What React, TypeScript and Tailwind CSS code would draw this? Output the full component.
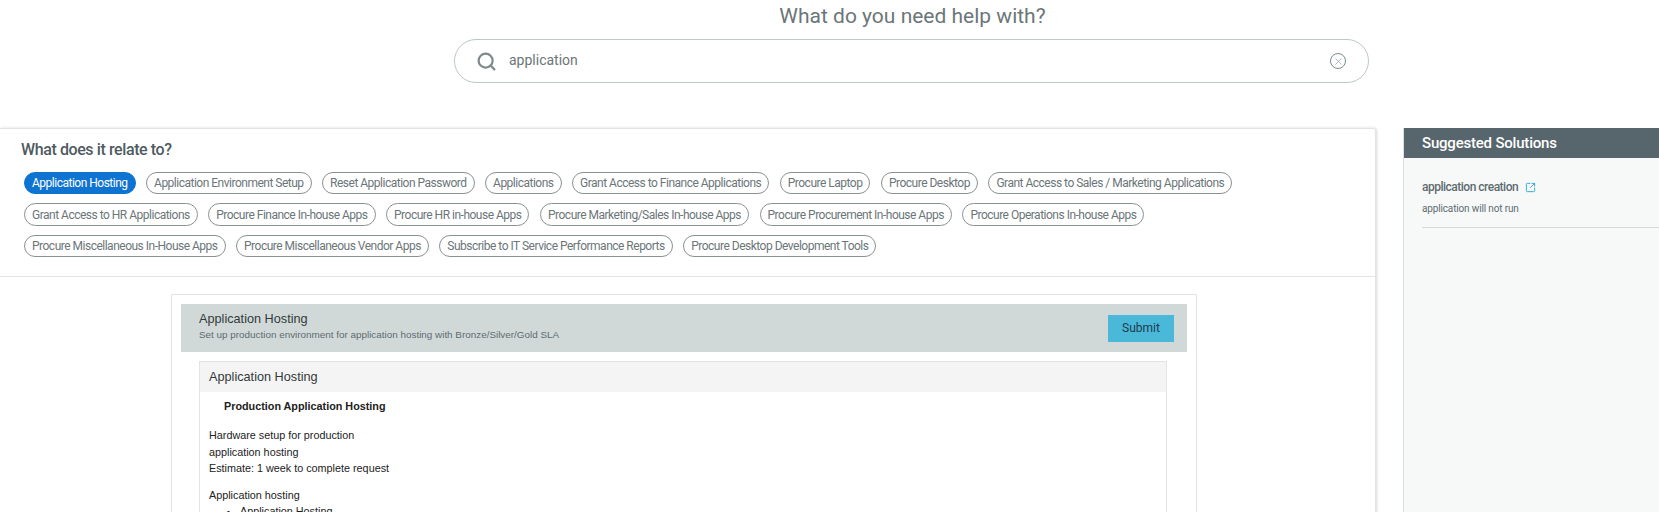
import { Search, SquareArrowOutUpRight, X } from "lucide-react";

const chipRows = [
  {
    height: "flex h-[22px] gap-[10.5px]",
    labels: [
      "Application Hosting",
      "Application Environment Setup",
      "Reset Application Password",
      "Applications",
      "Grant Access to Finance Applications",
      "Procure Laptop",
      "Procure Desktop",
      "Grant Access to Sales / Marketing Applications",
    ],
  },
  {
    height: "flex h-[23px] gap-[10.5px]",
    labels: [
      "Grant Access to HR Applications",
      "Procure Finance In-house Apps",
      "Procure HR in-house Apps",
      "Procure Marketing/Sales In-house Apps",
      "Procure Procurement In-house Apps",
      "Procure Operations In-house Apps",
    ],
  },
  {
    height: "flex h-[22px] gap-[10.5px]",
    labels: [
      "Procure Miscellaneous In-House Apps",
      "Procure Miscellaneous Vendor Apps",
      "Subscribe to IT Service Performance Reports",
      "Procure Desktop Development Tools",
    ],
  },
];

function Chip({ label, active }: { label: string; active: boolean }) {
  return (
    <span
      className={
        active
          ? "flex items-center rounded-full border border-[#0f74d1] bg-[#0f74d1] px-[7px] text-[12px] tracking-[-0.5px] text-white"
          : "flex items-center rounded-full border border-[#8a9191] bg-white px-[7px] text-[12px] tracking-[-0.5px] text-[#6b7679]"
      }
    >
      {label}
    </span>
  );
}

export default function App() {
  return (
    <div className="h-[512px] w-[1659px] overflow-hidden bg-white font-['Roboto',sans-serif]">
      <h1 className="pl-[166px] pt-[2px] text-center text-[21px] leading-[28px] text-[#6b7679]">
        What do you need help with?
      </h1>

      <div className="ml-[454px] mt-[9px] flex h-[44px] w-[915px] items-center rounded-full border border-[#bcc7c7] pl-[21px] pr-[22px]">
        <Search className="h-[21px] w-[21px] text-[#7d8a8c]" strokeWidth={2.5} />
        <span className="mb-[1px] ml-[12px] flex-1 text-[14px] text-[#6b7679]">application</span>
        <span className="flex h-[16px] w-[16px] items-center justify-center rounded-full border border-[#7d8a8c]">
          <X className="h-[11px] w-[11px] text-[#7d8a8c]" strokeWidth={1.25} />
        </span>
      </div>

      <div className="mt-[45px] flex items-start">
        <main className="h-[400px] w-[1376px] rounded-tr-[3px] border-r border-t border-[#e2e4e4] shadow-[1px_0_3px_rgba(0,0,0,0.15)]">
          <div className="h-[148px] border-b border-[#e2e4e4] pl-[21px] pt-[10px]">
            <h2 className="text-[16px] font-medium leading-[22px] tracking-[-0.4px] text-[#4f5b5f]">What does it relate to?</h2>
            <div className="mt-[11px] flex flex-col gap-[9px] pl-[3px]">
              {chipRows.map((row) => (
                <div key={row.labels[0]} className={row.height}>
                  {row.labels.map((label) => (
                    <Chip key={label} label={label} active={label === "Application Hosting"} />
                  ))}
                </div>
              ))}
            </div>
          </div>

          <div className="ml-[171px] mt-[17px] h-[240px] w-[1026px] border border-[#e2e4e4] px-[9px] pt-[9px] font-['Liberation_Sans',sans-serif]">
            <div className="flex h-[48px] w-[1006px] items-center justify-between bg-[#d0d9d8] pl-[18px] pr-[13px]">
              <div className="pb-[2px]">
                <div className="text-[12.7px] leading-[16px] text-[#33393b]">Application Hosting</div>
                <div className="text-[9.9px] leading-[16px] text-[#5f6b6f]">
                  Set up production environment for application hosting with Bronze/Silver/Gold SLA
                </div>
              </div>
              <button className="h-[27px] w-[66px] bg-[#4ab9d9] font-['Roboto',sans-serif] text-[12px] text-[#1f3a4d]">Submit</button>
            </div>

            <div className="ml-[18px] mt-[9px] h-[160px] w-[968px] border border-[#e2e4e4]">
              <div className="flex h-[30px] items-center bg-[#f4f4f4] pl-[9px] pt-[1px] text-[12.7px] text-[#33393b]">Application Hosting</div>
              <div className="pl-[9px] text-[10.8px] text-[#222]">
                <div className="ml-[15px] pt-[6px] font-bold leading-[16px]">Production Application Hosting</div>
                <div className="mt-[13px] leading-[16.5px]">
                  <div>Hardware setup for production</div>
                  <div>application hosting</div>
                  <div>Estimate: 1 week to complete request</div>
                </div>
                <div className="mt-[10px] leading-[16px]">Application hosting</div>
                <ul className="ml-[31px] list-disc leading-[16px]">
                  <li>Application Hosting</li>
                </ul>
              </div>
            </div>
          </div>
        </main>

        <aside className="ml-[27px] h-[400px] flex-1 border-l border-[#d9dddd] bg-[#f7f9f9]">
          <div className="flex h-[30px] items-center bg-[#56666c] pb-[0px] pl-[18px] pt-[1px] text-[15px] font-medium tracking-[-0.2px] text-white">
            Suggested Solutions
          </div>
          <div className="ml-[18px] h-[70px] border-b border-[#d5d9d9] pt-[20px]">
            <div className="flex items-center gap-[7px] text-[12px] font-medium leading-[18px] tracking-[-0.5px] text-[#5f6b6f]">
              application creation
              <SquareArrowOutUpRight className="h-[11px] w-[11px] text-[#29a9d8]" strokeWidth={2} />
            </div>
            <div className="mt-[6px] text-[10px] leading-[14px] tracking-[-0.15px] text-[#5f6b6f]">application will not run</div>
          </div>
        </aside>
      </div>
    </div>
  );
}
